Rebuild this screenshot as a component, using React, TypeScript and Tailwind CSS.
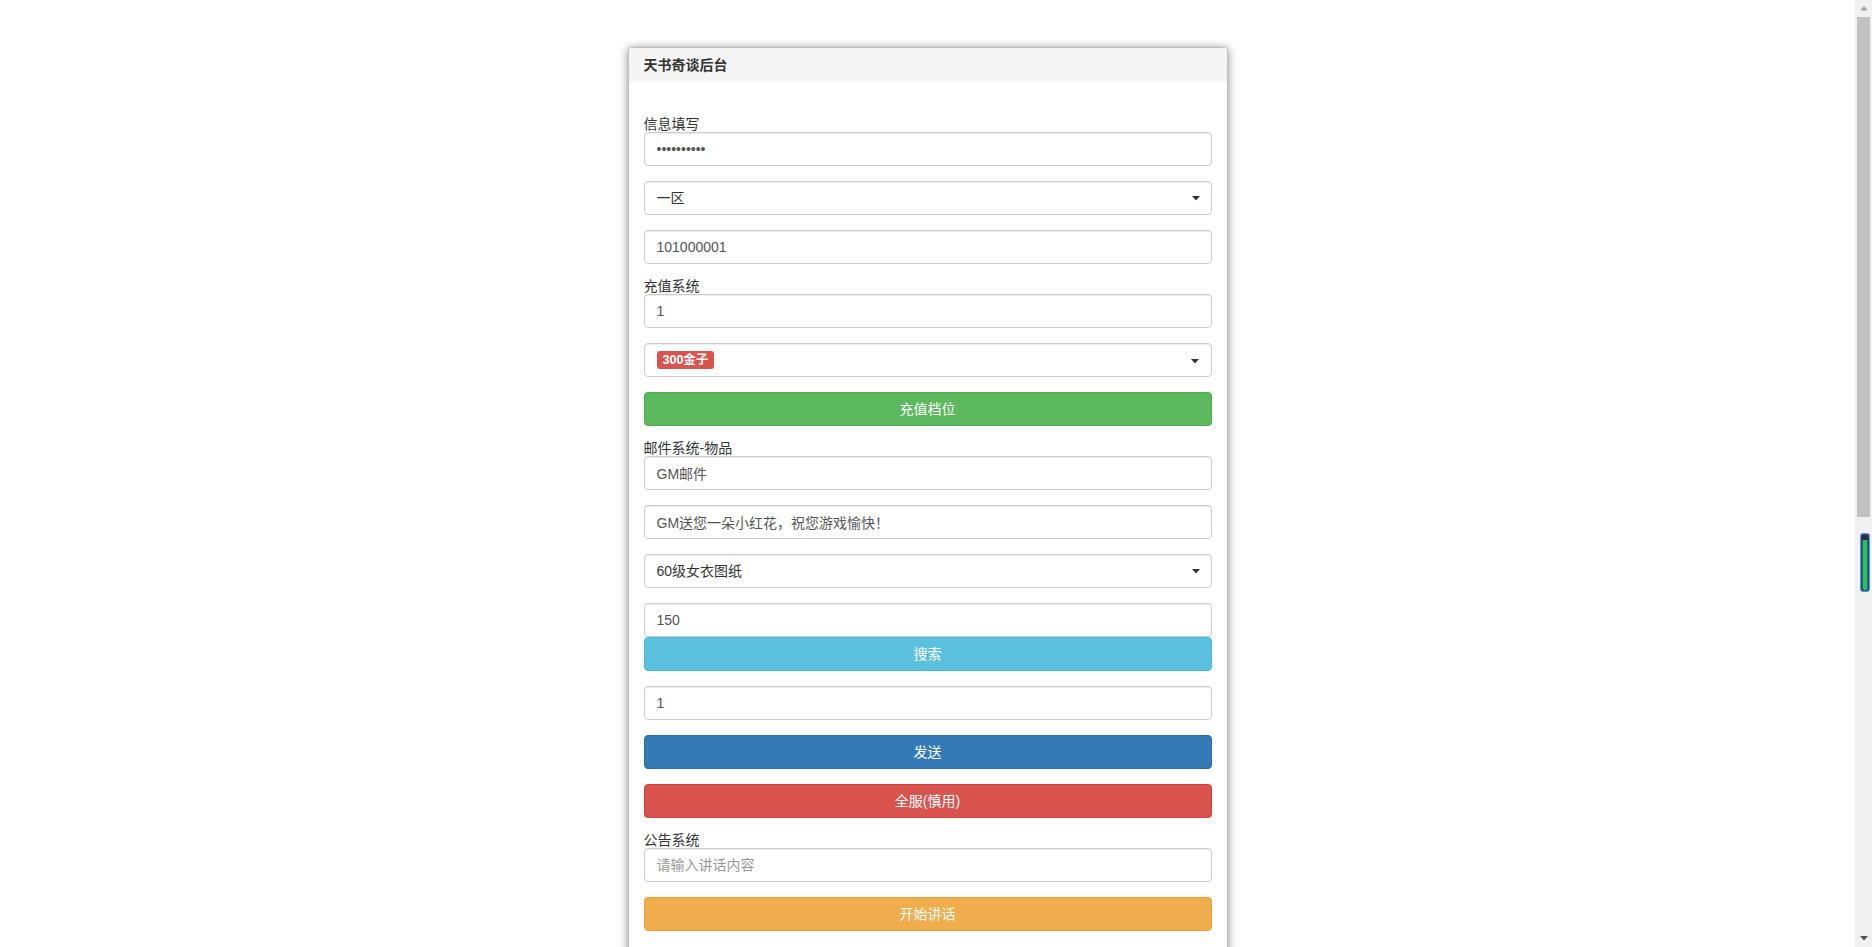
import type { ReactNode } from "react";

const FONT = "font-['Liberation_Sans','Noto_Sans_CJK_SC',sans-serif]";

function FieldLabel({ children }: { children: ReactNode }) {
  return (
    <label className="block h-[15px] text-[14px] leading-[15px] text-[#333]">
      {children}
    </label>
  );
}

function TextField({
  value,
  placeholder,
  type = "text",
  last,
}: {
  value?: string;
  placeholder?: string;
  type?: string;
  last?: boolean;
}) {
  return (
    <input
      type={type}
      defaultValue={value}
      placeholder={placeholder}
      className={`block h-[34px] w-full rounded-[4px] border border-[#ccc] bg-white px-[12px] text-[14px] text-[#555] shadow-[inset_0_1px_1px_rgba(0,0,0,0.075)] outline-none placeholder:text-[#999] ${last ? "" : "mb-[15px]"}`}
    />
  );
}

function Caret() {
  return (
    <svg
      width="8"
      height="5"
      viewBox="0 0 8 5"
      className="pointer-events-none absolute right-[12px] top-[15px]"
    >
      <path d="M0 0 H8 L4 4.5 Z" fill="#333" />
    </svg>
  );
}

function SelectField({ options }: { options: string[] }) {
  return (
    <div className="relative mb-[15px]">
      <select className="block h-[34px] w-full appearance-none rounded-[4px] border border-[#ccc] bg-white px-[12px] text-[14px] text-[#333] shadow-[inset_0_1px_1px_rgba(0,0,0,0.075)] outline-none">
        {options.map((o) => (
          <option key={o}>{o}</option>
        ))}
      </select>
      <Caret />
    </div>
  );
}

// the recharge picker shows its option as a red label, so it is not a native select
function BadgeSelect({ text }: { text: string }) {
  return (
    <div className="relative mb-[15px] flex h-[34px] w-full items-center rounded-[4px] border border-[#ccc] bg-white px-[12px] shadow-[inset_0_1px_1px_rgba(0,0,0,0.075)]">
      <span className="flex h-[18px] items-center rounded-[3px] bg-[#d9534f] px-[6px] text-[12.5px] font-bold leading-none text-white">
        {text}
      </span>
      <Caret />
    </div>
  );
}

const BUTTON_COLORS = {
  success: "bg-[#5cb85c] border-[#4cae4c]",
  info: "bg-[#5bc0de] border-[#46b8da]",
  primary: "bg-[#337ab7] border-[#2e6da4]",
  danger: "bg-[#d9534f] border-[#d43f3a]",
  warning: "bg-[#f0ad4e] border-[#eea236]",
};

function ActionButton({
  children,
  color,
}: {
  children: ReactNode;
  color: keyof typeof BUTTON_COLORS;
}) {
  return (
    <button
      type="button"
      className={`mb-[15px] block h-[34px] w-full rounded-[4px] border text-[14px] leading-none text-white ${BUTTON_COLORS[color]}`}
    >
      {children}
    </button>
  );
}

function FakeScrollbar() {
  return (
    <div className="relative flex h-full w-[17px] shrink-0 flex-col bg-[#f1f1f1]">
      <div className="flex h-[17px] items-center justify-center">
        <svg width="8" height="5" viewBox="0 0 8 5">
          <path d="M0 4.5 H8 L4 0 Z" fill="#a3a3a3" />
        </svg>
      </div>
      <div className="flex-1">
        <div className="mx-[2px] h-[500px] bg-[#c1c1c1]" />
      </div>
      <div className="flex h-[17px] items-center justify-center">
        <svg width="8" height="5" viewBox="0 0 8 5">
          <path d="M0 0 H8 L4 4.5 Z" fill="#505050" />
        </svg>
      </div>

      {/* little battery widget that sits over the scrollbar */}
      <div className="absolute left-[5px] top-[533px] flex h-[59px] w-[10px] flex-col rounded-[3px] border border-[#3d9bff] bg-[#463d6e] p-[1px]">
        <div className="h-[5px] rounded-t-[2px] bg-[#2e2f36]" />
        <div className="flex-1 rounded-b-[2px] border-x border-[#2c6b43] bg-[#22c55e]" />
      </div>
    </div>
  );
}

export default function App() {
  return (
    <div className={`flex h-[947px] w-full overflow-hidden bg-white ${FONT}`}>
      <div className="flex-1 overflow-hidden">
        <div className="mx-auto mt-[47px] w-[600px] rounded-[4px] border border-[#bdbdbd] bg-white shadow-[0_1px_10px_rgba(0,0,0,0.45)]">
          <div className="flex h-[34px] items-center rounded-t-[3px] bg-[#f5f5f5] px-[15px] text-[14px] font-bold text-[#333]">
            天书奇谈后台
          </div>

          <div className="px-[15px] pb-[120px] pt-[35px]">
            <FieldLabel>信息填写</FieldLabel>
            <TextField type="password" value="1234567890" />
            <SelectField options={["一区", "二区", "三区"]} />
            <TextField value="101000001" />

            <FieldLabel>充值系统</FieldLabel>
            <TextField value="1" />
            <BadgeSelect text="300金子" />
            <ActionButton color="success">充值档位</ActionButton>

            <FieldLabel>邮件系统-物品</FieldLabel>
            <TextField value="GM邮件" />
            <TextField value="GM送您一朵小红花，祝您游戏愉快！" />
            <SelectField options={["60级女衣图纸", "60级男衣图纸", "60级武器图纸"]} />
            <TextField value="150" last />
            <ActionButton color="info">搜索</ActionButton>
            <TextField value="1" />
            <ActionButton color="primary">发送</ActionButton>
            <ActionButton color="danger">全服(慎用)</ActionButton>

            <FieldLabel>公告系统</FieldLabel>
            <TextField placeholder="请输入讲话内容" />
            <ActionButton color="warning">开始讲话</ActionButton>
          </div>
        </div>
      </div>
      <FakeScrollbar />
    </div>
  );
}
